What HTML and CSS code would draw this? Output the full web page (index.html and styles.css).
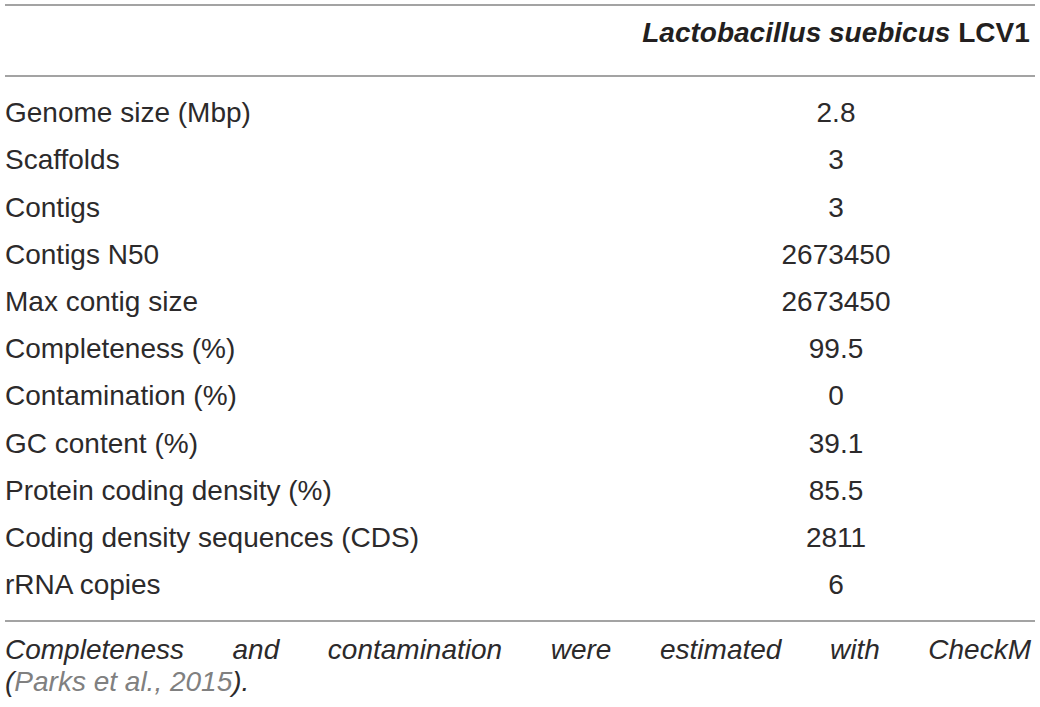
FILE: index.html
```html
<!DOCTYPE html>
<html lang="en">
<head>
    <meta charset="UTF-8">
    <title>Genome features</title>
    <link rel="stylesheet" href="styles.css">
</head>
<body>
    <div id="wrap">
        <table id="genome">
            <colgroup>
                <col class="c-name">
                <col class="c-val">
            </colgroup>
            <thead>
                <tr>
                    <th></th>
                    <th class="val"><i>Lactobacillus suebicus</i> LCV1</th>
                </tr>
            </thead>
            <tbody>
                <tr><td>Genome size (Mbp)</td><td class="val">2.8</td></tr>
                <tr><td>Scaffolds</td><td class="val">3</td></tr>
                <tr><td>Contigs</td><td class="val">3</td></tr>
                <tr><td>Contigs N50</td><td class="val">2673450</td></tr>
                <tr><td>Max contig size</td><td class="val">2673450</td></tr>
                <tr><td>Completeness (%)</td><td class="val">99.5</td></tr>
                <tr><td>Contamination (%)</td><td class="val">0</td></tr>
                <tr><td>GC content (%)</td><td class="val">39.1</td></tr>
                <tr><td>Protein coding density (%)</td><td class="val">85.5</td></tr>
                <tr><td>Coding density sequences (CDS)</td><td class="val">2811</td></tr>
                <tr><td>rRNA copies</td><td class="val">6</td></tr>
            </tbody>
        </table>
        <p id="note">Completeness and contamination were estimated with CheckM <span class="cite">(<span class="ref">Parks et al., 2015</span>).</span></p>
    </div>
</body>
</html>
```

FILE: styles.css
```css
*{
    margin:0px;
    padding:0px;
    box-sizing: border-box;
}
body{
    background:#ffffff;
    color:#2c2a2b;
    font-family:"Liberation Sans", Arial, sans-serif;
    font-size:28px;
    line-height:32px;
}
#wrap{
    padding:4px 5px 0px 5px;
    width:1040px;
}
#genome{
    width:1030px;
    border-collapse: collapse;
    table-layout: fixed;
}
.c-name{
    width:632px;
}
.c-val{
    width:398px;
}
#genome thead tr{
    border-top:2px solid #a3a3a3;
    border-bottom:2px solid #a3a3a3;
}
#genome th{
    font-weight: bold;
    color:#231f20;
    padding-top:11px;
    padding-bottom:26px;
    text-align: left;
}
#genome td{
    font-weight: normal;
    padding-top:7.6px;
    padding-bottom:7.6px;
    text-align: left;
}
#genome tbody tr:first-child td{
    padding-top:20.3px;
}
#genome tbody tr:last-child td{
    padding-bottom:19px;
}
#genome tbody tr:last-child{
    border-bottom:2px solid #a3a3a3;
}
#genome .val{
    text-align: center;
}
#note{
    font-style: italic;
    text-align: justify;
    margin-top:12px;
    width:1026px;
}
.cite{
    white-space: nowrap;
}
.ref{
    color:#808080;
}
```
